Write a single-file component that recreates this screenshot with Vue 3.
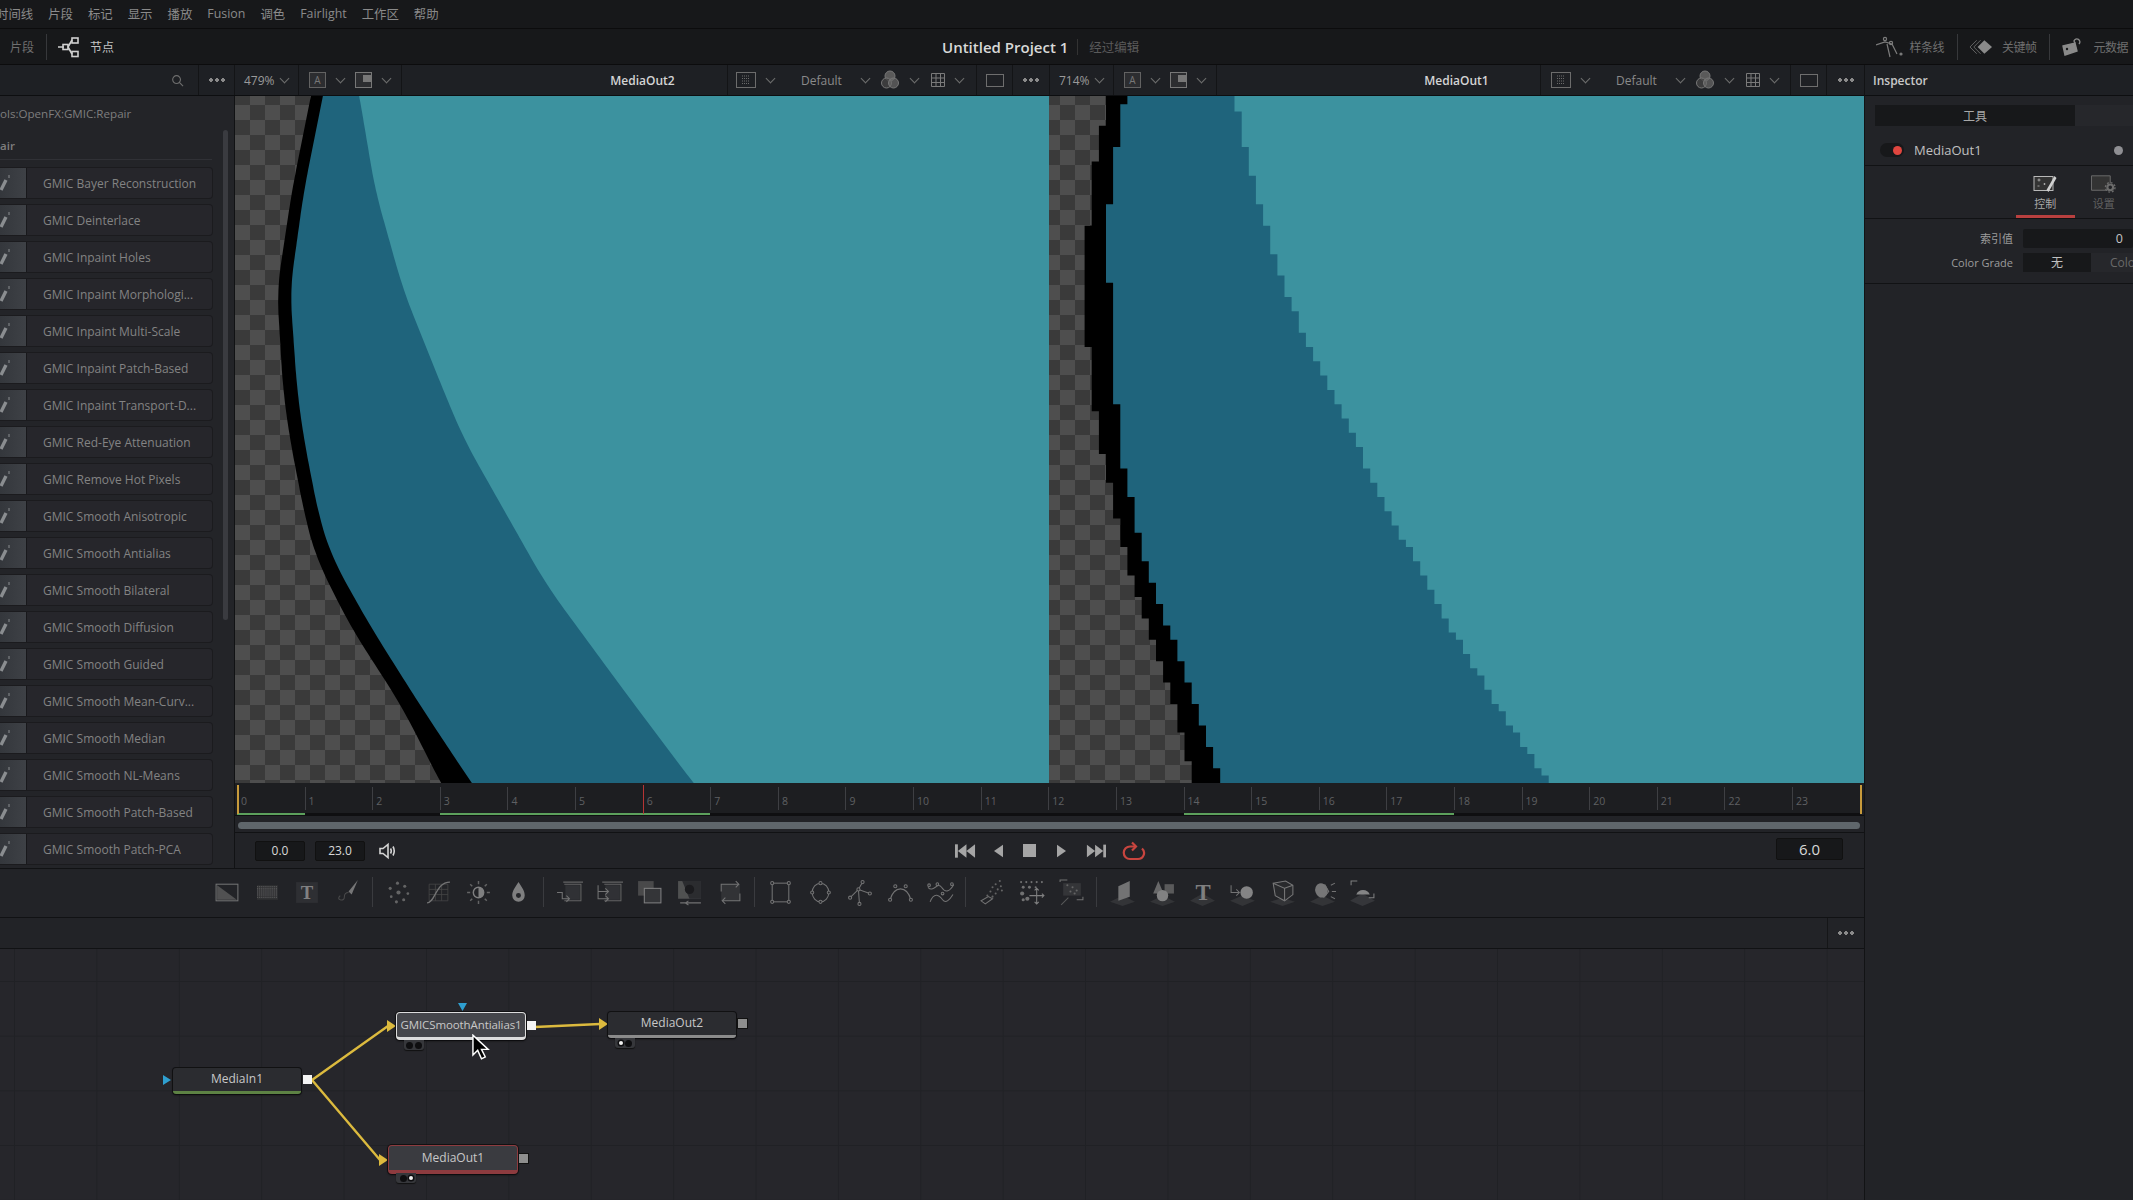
<script setup>
import { computed } from "vue";

const menus = ["片段", "标记", "显示", "播放", "Fusion", "调色", "Fairlight", "工作区", "帮助"];

const tools = [
  "Bayer Reconstruction", "Deinterlace", "Inpaint Holes", "Inpaint Morphologi...", "Inpaint Multi-Scale",
  "Inpaint Patch-Based", "Inpaint Transport-D...", "Red-Eye Attenuation", "Remove Hot Pixels",
  "Smooth Anisotropic", "Smooth Antialias", "Smooth Bilateral", "Smooth Diffusion", "Smooth Guided",
  "Smooth Mean-Curv...", "Smooth Median", "Smooth NL-Means", "Smooth Patch-Based", "Smooth Patch-PCA",
];

// frames that are cached get a green line under the ruler
const cached = [0, 3, 4, 5, 6, 14, 15, 16, 17];
const frames = Array.from({ length: 24 }, (_, i) => i);
const framePx = 67.62;

// edges of the picture, as [y, x] in page pixels
const edges1 = {
  black: [[60, 318], [95, 311], [190, 292], [290, 277], [390, 283], [440, 290], [517, 305], [558, 316], [626, 350], [707, 402], [790, 444], [830, 470]],
  dark: [[60, 330], [95, 323], [190, 304], [290, 290], [390, 297], [440, 304], [517, 319], [558, 332], [626, 370], [707, 421], [790, 476], [830, 505]],
  light: [[60, 352], [95, 359], [190, 375], [290, 403], [390, 443], [440, 464], [585, 546], [694, 626], [790, 698], [830, 733]],
};
const edges2 = {
  black: [[90, 1108], [127, 1102], [162, 1095], [227, 1088], [310, 1085], [390, 1092], [462, 1104], [544, 1123], [612, 1142], [707, 1174], [790, 1195]],
  dark: [[90, 1130], [112, 1122], [155, 1116], [205, 1109], [340, 1110], [390, 1115], [462, 1123], [544, 1140], [612, 1163], [707, 1197], [790, 1224]],
  light: [[90, 1234], [150, 1246], [204, 1260], [290, 1284], [390, 1330], [517, 1392], [626, 1450], [707, 1498], [790, 1553]],
};

function xAt(pts, y) {
  for (let i = 0; i < pts.length - 1; i++) {
    if (y <= pts[i + 1][0]) {
      const t = (y - pts[i][0]) / (pts[i + 1][0] - pts[i][0]);
      return pts[i][1] + (pts[i + 1][1] - pts[i][1]) * t;
    }
  }
  return pts[pts.length - 1][1];
}

// soft edge: sample and average neighbours so the corners round off
function smoothPath(pts, right) {
  let d = "";
  for (let y = 90; y <= 790; y += 4) {
    let sum = 0;
    for (let k = -24; k <= 24; k += 6) sum += xAt(pts, y + k);
    d += (d ? "L" : "M") + (sum / 9).toFixed(1) + " " + y + " ";
  }
  return d + `L${right} 790 L${right} 90 Z`;
}

// 714% view: the same kind of edge but snapped to the source pixels
function stepPath(pts, right) {
  const s = 7.14;
  const ox = 1106;
  let d = "";
  for (let y = 90; y < 790; y += s) {
    const x = ox + Math.round((xAt(pts, y + s / 2) - ox) / s) * s;
    d += (d ? "L" : "M") + x.toFixed(1) + " " + y.toFixed(1) + " L" + x.toFixed(1) + " " + (y + s).toFixed(1) + " ";
  }
  return d + `L${right} 790 L${right} 90 Z`;
}

const view1 = computed(() => Object.values(edges1).map((e) => smoothPath(e, 1060)));
const view2 = computed(() => Object.values(edges2).map((e) => stepPath(e, 1870)));
const layerFill = ["#000", "#1f647c", "#3c929f"];

const toolIcons = [
  [
    '<rect x="2" y="5" width="21" height="16" stroke="#8a8a8a"/><path d="M3 6L22 20H3Z" fill="#5f5f5f" stroke="none"/>',
    '<rect x="3" y="6" width="20" height="14" fill="#353537" stroke="none"/><path d="M3 7.5H23M3 9.5H23M3 11.5H23M3 13.5H23M3 15.5H23M3 17.5H23" stroke="#7c7c7c" stroke-dasharray="1 1"/>',
    '<rect x="2" y="3" width="21" height="20" fill="#323337" stroke="none"/><text x="12.5" y="19" text-anchor="middle" font-family="Liberation Serif" font-size="18" font-weight="700" fill="#9c9c9c" stroke="none">T</text>',
    '<path d="M23 1L14 12L17 15Z" fill="#8e8e8e" stroke="none"/><path d="M14 13Q10 13 10 17Q10 21 6 20Q3 19 6 16" stroke="#555"/>',
  ],
  [
    '<g fill="#777" stroke="none"><circle cx="12" cy="4" r="1.5"/><circle cx="19" cy="7" r="1.5"/><circle cx="22" cy="14" r="1.3"/><circle cx="18" cy="20" r="1.5"/><circle cx="11" cy="22" r="1.5"/><circle cx="6" cy="17" r="1.3"/><circle cx="5" cy="9" r="1.5"/><circle cx="13" cy="13" r="2"/></g>',
    '<path d="M4 5H22V21H4ZM10 5V21M16 5V21M4 10H22M4 15H22" stroke="#4f4f4f" stroke-width=".8"/><path d="M2 23C10 23 10 3 24 3" stroke="#8c8c8c" stroke-width="1.2"/>',
    '<circle cx="13" cy="13" r="5" stroke="#9a9a9a" stroke-width="1.4"/><path d="M13 8A5 5 0 0 1 13 18Z" fill="#9a9a9a" stroke="none"/><path d="M13 2V5M13 21V24M2 13H5M21 13H24M5 5L7 7M19 19L21 21M5 21L7 19M19 7L21 5" stroke="#777" stroke-width="1.4"/>',
    '<path d="M13 3C9 9 7 12 7 16A6 6 0 0 0 19 16C19 12 17 9 13 3Z" fill="#9a9a9a" stroke="none"/><circle cx="13" cy="16" r="2.4" fill="#26272b" stroke="none"/>',
  ],
  [
    '<path d="M7 3H26M8 5H24V21H8" stroke="#777"/><rect x="9" y="6" width="14" height="14" fill="#353639" stroke="none"/><path d="M1 13H6V19H13M10 16L13 19L10 22" stroke="#8a8a8a"/>',
    '<path d="M6 3H26M8 5H24V21H8" stroke="#777"/><rect x="9" y="6" width="14" height="14" fill="#353639" stroke="none"/><path d="M2 6V19H12M2 12H12M9 9L12 12L9 15M9 16L12 19L9 22" stroke="#8a8a8a"/>',
    '<rect x="2" y="2" width="15" height="14" fill="#545454" stroke="none"/><rect x="8" y="9" width="16" height="14" fill="#3a3b3e" stroke="#9a9a9a"/>',
    '<rect x="2" y="2" width="22" height="17" fill="#5e5e5e" stroke="none"/><path d="M2 2H20L13 19H2Z" fill="#2e2f32" stroke="none" transform="matrix(-1 0 0 1 26 0)"/><circle cx="13" cy="10" r="4.5" fill="#1a1a1c" stroke="none"/><path d="M4 23H24M12 21L9 23L12 25" stroke="#888"/>',
    '<rect x="5" y="5" width="18" height="16" fill="#37383b" stroke="none"/><path d="M5 12V5H21M19 2L22 5L19 8M23 14V21H7M9 18L6 21L9 24" stroke="#8c8c8c"/>',
  ],
  [
    '<rect x="5" y="4" width="16" height="18" stroke="#8a8a8a"/><g fill="#26272b" stroke="#8a8a8a"><circle cx="5" cy="4" r="1.5"/><circle cx="21" cy="4" r="1.5"/><circle cx="5" cy="22" r="1.5"/><circle cx="21" cy="22" r="1.5"/></g>',
    '<ellipse cx="13" cy="13" rx="8" ry="9" stroke="#8a8a8a"/><g fill="#26272b" stroke="#8a8a8a"><circle cx="13" cy="4" r="1.5"/><circle cx="21" cy="13" r="1.5"/><circle cx="13" cy="22" r="1.5"/><circle cx="5" cy="13" r="1.5"/></g>',
    '<path d="M15 3L11 10L22 14M11 10L12 24M11 10L3 18" stroke="#8a8a8a"/><g fill="#26272b" stroke="#8a8a8a"><circle cx="15" cy="3" r="1.5"/><circle cx="22" cy="14" r="1.5"/><circle cx="12" cy="24" r="1.5"/><circle cx="3" cy="18" r="1.5"/><circle cx="11" cy="10" r="1.5"/></g>',
    '<path d="M3 20C7 6 19 6 23 20" stroke="#8a8a8a"/><g fill="#26272b" stroke="#8a8a8a"><circle cx="3" cy="20" r="1.5"/><circle cx="23" cy="20" r="1.5"/><circle cx="8" cy="7" r="1.5"/><circle cx="18" cy="7" r="1.5"/></g>',
    '<path d="M1 8C6 14 10 2 14 8S22 12 26 5M3 22C7 12 12 16 15 20S22 20 25 15" stroke="#8a8a8a"/><g fill="#26272b" stroke="#8a8a8a"><circle cx="2" cy="6" r="1.3"/><circle cx="24" cy="5" r="1.3"/><circle cx="10" cy="5" r="1.3"/><circle cx="15" cy="14" r="1.3"/></g>',
  ],
  [
    '<g fill="#777" stroke="none"><circle cx="21" cy="2" r="1"/><circle cx="17" cy="5" r="1"/><circle cx="22" cy="7" r="1"/><circle cx="14" cy="8" r="1"/><circle cx="19" cy="10" r="1"/><circle cx="12" cy="12" r="1"/><circle cx="17" cy="14" r="1"/><circle cx="23" cy="11" r="1"/><circle cx="9" cy="16" r="1"/><circle cx="14" cy="17" r="1"/></g><path d="M3 21L10 17L14 19L7 24Z" stroke="#888"/>',
    '<g fill="#888" stroke="none"><circle cx="3" cy="3" r="1"/><circle cx="8" cy="3" r="1"/><circle cx="13" cy="3" r="1"/><circle cx="18" cy="3" r="1"/><circle cx="23" cy="3" r="1"/><circle cx="5" cy="8" r="1.4"/><circle cx="11" cy="8" r="1.4"/><circle cx="17" cy="8" r="1"/><circle cx="4" cy="14" r="2"/><circle cx="9" cy="19" r="2"/><circle cx="5" cy="20" r="1.5"/></g><path d="M11 16H25M18 9V24M16 11L18 9L20 11M16 22L18 24L20 22M23 14L25 16L23 18" stroke="#9a9a9a"/>',
    '<path d="M2 3V1H9M24 17V20H18" stroke="#888"/><g fill="#777" stroke="none"><rect x="5" y="4" width="17" height="12" fill="#3a3b3e"/><circle cx="9" cy="6" r="1"/><circle cx="14" cy="8" r="1"/><circle cx="18" cy="11" r="1"/><circle cx="12" cy="12" r="1"/><circle cx="16" cy="14" r="1"/></g><path d="M3 25L10 18" stroke="#666"/>',
  ],
  [
    '<path d="M13 16L25 22L13 26L1 22Z" fill="#38393c" stroke="none"/><path d="M9 7L20 2V17L9 21Z" fill="#8a8a8a" stroke="none"/>',
    '<path d="M13 16L25 22L13 26L1 22Z" fill="#38393c" stroke="none"/><path d="M9 2L14 14H4Z" fill="#7c7c7c" stroke="none"/><rect x="15" y="5" width="9" height="9" fill="#6a6a6a" stroke="none"/><circle cx="13" cy="16" r="5.5" fill="#9c9c9c" stroke="none"/>',
    '<path d="M13 14L25 21L13 26L1 21Z" fill="#38393c" stroke="none"/><text x="13.5" y="20" text-anchor="middle" font-family="Liberation Serif" font-size="22" font-weight="700" fill="#9a9a9a" stroke="none">T</text>',
    '<path d="M13 16L25 21L13 26L1 21Z" fill="#38393c" stroke="none"/><path d="M2 6V13H10M7 10L10 13L7 16" stroke="#8a8a8a"/><circle cx="17" cy="13" r="6" fill="#a0a0a0" stroke="none"/>',
    '<path d="M13 18L25 22L13 26L1 22Z" fill="#38393c" stroke="none"/><path d="M4 4L16 2L23 6V15L15 21L6 16Z" fill="#2b2c2f" stroke="#909090"/><path d="M4 4L15 9V21M15 9L23 6" stroke="#909090"/>',
    '<path d="M13 16L25 22L13 26L1 22Z" fill="#38393c" stroke="none"/><ellipse cx="12" cy="11" rx="6" ry="7" fill="#8e8e8e" stroke="none" transform="rotate(-18 12 11)"/><path d="M15 5L19 12L14 18M21 6L25 4M22 12H26M21 17L25 19" stroke="#8a8a8a"/>',
    '<path d="M13 14L25 21L13 26L1 21Z" fill="#3b3c40" stroke="none"/><path d="M7 15A7 7 0 0 1 20 15Z" fill="#a0a0a0" stroke="none"/><path d="M2 6V2H8M24 14V18H19" stroke="#999"/>',
  ],
];

const nodes = [
  { id: "in1", name: "MediaIn1", cls: "n-in", out: "white" },
  { id: "gmic", name: "GMICSmoothAntialias1", cls: "n-gmic", out: "white", dots: [0, 0] },
  { id: "out2", name: "MediaOut2", cls: "n-out2", out: "gray", dots: [1, 0] },
  { id: "out1", name: "MediaOut1", cls: "n-out1", out: "gray", dots: [0, 1] },
];
// input arrows on the wires: tip x, y, base x
const arrows = [
  [396, 1026, 387],
  [608, 1024, 599],
  [388, 1160, 379],
];
</script>

<template>
  <div class="app">
    <header class="menubar">
      <span class="first-menu">时间线</span>
      <span v-for="m in menus" :key="m">{{ m }}</span>
    </header>

    <div class="topbar">
      <div class="tb-left">
        <span class="tb-label">片段</span>
        <i class="tb-sep"></i>
        <svg class="tb-nodes" viewBox="0 0 24 24" fill="none" stroke="#d0d0d0" stroke-width="1.6">
          <path d="M1 12H7M11 12L15 5M11 12L15 19" />
          <rect x="6" y="9.5" width="5" height="5" />
          <rect x="15" y="3" width="6" height="5" />
          <rect x="15" y="16.5" width="6" height="5" />
        </svg>
        <span class="tb-label tb-on">节点</span>
      </div>
      <div class="tb-title">
        <b>Untitled Project 1</b>
        <i class="title-sep"></i>
        <span>经过编辑</span>
      </div>
      <div class="tb-right">
        <svg class="tb-ico" viewBox="0 0 27 22" fill="none" stroke="#7c7c7c" stroke-width="1.2">
          <path d="M0 9L9 6L16 8M11 8L14 21M16 8L21 18" />
          <circle cx="9" cy="3" r="1.6" /><circle cx="15" cy="7" r="1.6" />
          <circle cx="25" cy="18" r="1" fill="#7c7c7c" />
        </svg>
        <span class="tb-label tb-r1">样条线</span>
        <i class="tb-sep"></i>
        <svg class="tb-ico tb-kf" viewBox="0 0 25 16" fill="none" stroke="#666">
          <path d="M8 1L1 8L8 15M12 1L5 8L12 15" />
          <path d="M16 1L24 8L16 15L9 8Z" fill="#8a8a8a" stroke="none" />
        </svg>
        <span class="tb-label tb-r2">关键帧</span>
        <i class="tb-sep"></i>
        <svg class="tb-ico tb-meta" viewBox="0 0 20 18" fill="none" stroke="#8a8a8a" stroke-width="1.4">
          <path d="M1 8L13 5L15 13L3 17Z" fill="#8a8a8a" />
          <circle cx="5" cy="11" r="1.2" fill="#17181a" stroke="none" />
          <path d="M13 5L12 3A3 3 0 1 1 17 6" />
        </svg>
        <span class="tb-label tb-r3">元数据</span>
      </div>
    </div>

    <div class="work">
      <div class="main">
        <div class="heads">
          <div class="h-cell h-search">
            <svg class="search" viewBox="0 0 14 14" fill="none" stroke="#6e6e6e" stroke-width="1.2">
              <circle cx="6" cy="6" r="4.2" /><path d="M9 9L13 13" />
            </svg>
          </div>
          <div class="h-cell h-more"><i class="dots"></i></div>

          <div class="h-cell h-zoom"><span>479%</span><i class="chev chev-near"></i></div>
          <div class="h-cell h-ab">
            <span class="box-a">A</span><i class="chev"></i>
            <span class="box-pic"></span><i class="chev"></i>
          </div>
          <div class="h-title h-title-1">MediaOut2</div>
          <div class="h-cell h-opts">
            <svg class="ic-disp" viewBox="0 0 20 16" fill="none" stroke="#6c6c6c">
              <rect x=".5" y=".5" width="19" height="15" /><path d="M6 4H14M6 6.5H14M6 9H14M6 11.5H14" stroke-width="1.2" stroke-dasharray="1 1" />
            </svg>
            <i class="chev"></i>
            <span class="def">Default</span><i class="chev chev-def"></i>
            <svg class="ic-col" viewBox="0 0 20 20" fill="none" stroke="#777">
              <circle cx="10" cy="6" r="5" fill="#5a5a5a" /><circle cx="6.5" cy="13" r="5" fill="#444" fill-opacity=".8" /><circle cx="13.5" cy="13" r="5" fill="#6a6a6a" fill-opacity=".7" />
            </svg>
            <i class="chev"></i>
            <svg class="ic-grid" viewBox="0 0 14 14" fill="none" stroke="#7a7a7a">
              <path d="M.5.5H13.5V13.5H.5ZM5 .5V13.5M9.5 .5V13.5M.5 5H13.5M.5 9.5H13.5" />
            </svg>
            <i class="chev"></i>
          </div>
          <div class="h-cell h-rect"><span class="rect-ic"></span></div>
          <div class="h-cell h-more h-more-b"><i class="dots"></i></div>

          <div class="h-cell h-zoom"><span>714%</span><i class="chev chev-near"></i></div>
          <div class="h-cell h-ab">
            <span class="box-a">A</span><i class="chev"></i>
            <span class="box-pic"></span><i class="chev"></i>
          </div>
          <div class="h-title h-title-2">MediaOut1</div>
          <div class="h-cell h-opts h-opts-b">
            <svg class="ic-disp" viewBox="0 0 20 16" fill="none" stroke="#6c6c6c">
              <rect x=".5" y=".5" width="19" height="15" /><path d="M6 4H14M6 6.5H14M6 9H14M6 11.5H14" stroke-width="1.2" stroke-dasharray="1 1" />
            </svg>
            <i class="chev"></i>
            <span class="def">Default</span><i class="chev chev-def"></i>
            <svg class="ic-col" viewBox="0 0 20 20" fill="none" stroke="#777">
              <circle cx="10" cy="6" r="5" fill="#5a5a5a" /><circle cx="6.5" cy="13" r="5" fill="#444" fill-opacity=".8" /><circle cx="13.5" cy="13" r="5" fill="#6a6a6a" fill-opacity=".7" />
            </svg>
            <i class="chev"></i>
            <svg class="ic-grid" viewBox="0 0 14 14" fill="none" stroke="#7a7a7a">
              <path d="M.5.5H13.5V13.5H.5ZM5 .5V13.5M9.5 .5V13.5M.5 5H13.5M.5 9.5H13.5" />
            </svg>
            <i class="chev"></i>
          </div>
          <div class="h-cell h-rect"><span class="rect-ic"></span></div>
          <div class="h-cell h-more h-more-c"><i class="dots"></i></div>
        </div>

        <div class="upper">
          <aside class="toolbox">
            <div class="crumb">ols:OpenFX:GMIC:Repair</div>
            <div class="group">air</div>
            <div class="scroll-thumb"></div>
            <ul class="tool-list">
              <li v-for="t in tools" :key="t" class="tool">
                <span class="tool-ic">
                  <svg viewBox="0 0 12 20" fill="none" stroke="#8a8d90" stroke-width="3.4"><path d="M1 17L6 7" /><path d="M9 2V5" stroke-width="1" /></svg>
                </span>
                <span class="tool-name">GMIC {{ t }}</span>
              </li>
            </ul>
          </aside>

          <div class="centre">
            <div class="viewers">
              <div class="viewer viewer-a">
                <svg viewBox="235 96 813 687" preserveAspectRatio="none">
                  <path v-for="(d, i) in view1" :key="i" :d="d" :fill="layerFill[i]" />
                </svg>
              </div>
              <div class="viewer viewer-b">
                <svg viewBox="1049 96 815 687" preserveAspectRatio="none">
                  <path v-for="(d, i) in view2" :key="i" :d="d" :fill="layerFill[i]" />
                </svg>
              </div>
            </div>

            <div class="ruler">
              <div v-for="f in frames" :key="f" class="frame" :class="{ cached: cached.includes(f) }">
                <span class="tick">{{ f }}</span>
              </div>
              <i class="mark mark-start"></i>
              <i class="mark mark-end"></i>
              <i class="playhead" :style="{ left: 2 + 6 * framePx + 'px' }"></i>
            </div>

            <div class="range"><div class="range-bar"></div></div>

            <div class="controls">
              <span class="field">0.0</span>
              <span class="field field-2">23.0</span>
              <svg class="speaker" viewBox="0 0 18 18" fill="none" stroke="#d4d4d4" stroke-width="1.6">
                <path d="M2 6.5H5L10 2.5V15.5L5 11.5H2Z" /><path d="M12.5 6.5Q14 9 12.5 11.5M15 4.5Q17.5 9 15 13.5" />
              </svg>
              <div class="transport">
                <svg viewBox="0 0 22 14" fill="#a5a5a5"><rect x="0" y="0" width="3" height="14" /><path d="M12 0V14L3 7ZM21 0V14L12 7Z" /></svg>
                <svg class="t-prev" viewBox="0 0 10 14" fill="#a5a5a5"><path d="M10 0V14L0 7Z" /></svg>
                <svg class="t-stop" viewBox="0 0 14 14" fill="#a5a5a5"><rect width="14" height="14" /></svg>
                <svg class="t-play" viewBox="0 0 10 14" fill="#a5a5a5"><path d="M0 0V14L10 7Z" /></svg>
                <svg class="t-end" viewBox="0 0 22 14" fill="#a5a5a5"><rect x="19" y="0" width="3" height="14" /><path d="M1 0V14L10 7ZM10 0V14L19 7Z" /></svg>
                <svg class="t-loop" viewBox="0 0 24 20" fill="none" stroke="#c8453f" stroke-width="2.2">
                  <path d="M13 5.5H8A6 6 0 0 0 8 18H16A6 6 0 0 0 20 7.5" />
                  <path d="M10 1.5L14 5.5L10 9.5" />
                </svg>
              </div>
              <span class="field field-big">6.0</span>
            </div>
          </div>
        </div>

        <div class="toolbar">
          <template v-for="(group, g) in toolIcons" :key="g">
            <i v-if="g" class="tool-sep"></i>
            <span v-for="(ic, n) in group" :key="n" class="tool-btn">
              <svg viewBox="0 0 26 26" fill="none" stroke="#888" v-html="ic"></svg>
            </span>
          </template>
        </div>

        <div class="node-head"><span class="node-more"><i class="dots"></i></span></div>

        <div class="canvas">
          <svg class="wires" viewBox="0 949 1864 251" fill="none" stroke="#dcba3e" stroke-width="2.4">
            <path d="M312 1080L388 1026M312 1080L380 1160M535 1027L600 1024" />
            <path v-for="(a, i) in arrows" :key="i" :d="`M${a[0]} ${a[1]}L${a[2]} ${a[1] - 6}V${a[1] + 6}Z`" fill="#dcba3e" stroke="none" />
            <path d="M163 1075L171 1080L163 1085ZM458 1003H467L462.5 1011Z" fill="#2f9fd0" stroke="none" />
          </svg>

          <div v-for="n in nodes" :key="n.id" class="node" :class="n.cls">
            <span class="node-name">{{ n.name }}</span>
            <i class="port" :class="n.out"></i>
            <span v-if="n.dots" class="badge">
              <i v-for="(on, k) in n.dots" :key="k" :class="{ on }"></i>
            </span>
          </div>

          <svg class="cursor" viewBox="0 0 20 28">
            <path d="M1 1V22L6 17L10 26L14 24L10 16H17Z" fill="#000" stroke="#fff" stroke-width="1.5" />
          </svg>
        </div>
      </div>

      <aside class="inspector">
        <div class="ins-head">Inspector</div>
        <div class="ins-tabs"><span class="ins-tab">工具</span></div>
        <div class="ins-node">
          <span class="toggle"><i></i></span>
          <span class="ins-name">MediaOut1</span>
          <i class="ins-dot"></i>
        </div>
        <div class="ins-modes">
          <div class="mode active">
            <svg viewBox="0 0 24 18" fill="none" stroke="#b8b8b8">
              <rect x=".5" y="1.5" width="19" height="14" fill="#333" />
              <path d="M4 5H7M5.5 3.5V6.5M10 9H12M11 8V10M4 11H6" stroke-width=".8" />
              <path d="M21 1L13 15L15 17L23 3Z" fill="#d0d0d0" stroke="none" />
            </svg>
            <span>控制</span>
          </div>
          <div class="mode">
            <svg viewBox="0 0 26 18" fill="none" stroke="#6c6c6c">
              <path d="M17 15.5H.5V.5H20V8" fill="#333" />
              <circle cx="20" cy="12.5" r="3" stroke-width="2.2" /><circle cx="20" cy="12.5" r="5" stroke-width="1.4" stroke-dasharray="2 1.9" />
            </svg>
            <span>设置</span>
          </div>
        </div>
        <div class="ins-props">
          <div class="prop">
            <label>索引值</label>
            <span class="prop-field">0</span>
          </div>
          <div class="prop">
            <label>Color Grade</label>
            <div class="prop-seg"><span class="seg-on">无</span><span class="seg-off">Color</span></div>
          </div>
        </div>
      </aside>
    </div>
  </div>
</template>

<style scoped>
.app {
  width: 2133px;
  height: 1200px;
  display: flex;
  flex-direction: column;
  overflow: hidden;
  background: #222327;
  color: #8c8c8c;
  font-family: "Open Sans", "Noto Sans CJK SC", sans-serif;
  font-size: 12px;
}

i { font-style: normal; display: block; }

.menubar {
  height: 29px;
  flex: none;
  display: flex;
  align-items: center;
  gap: 15px;
  padding-bottom: 1px;
  background: #17181a;
  border-bottom: 1px solid #0c0c0d;
  box-sizing: border-box;
  font-size: 12.4px;
  color: #8a8a8a;
  overflow: hidden;
  white-space: nowrap;
}
.first-menu { margin-left: -4px; }

.topbar {
  height: 36px;
  flex: none;
  display: flex;
  align-items: center;
  position: relative;
  background: #17181a;
  border-bottom: 1px solid #0c0c0d;
  box-sizing: border-box;
}
.tb-left { display: flex; align-items: center; padding-left: 10px; width: 942px; box-sizing: border-box; }
.tb-sep { width: 1px; height: 26px; background: #37383b; margin-left: 12px; }
.tb-label { font-size: 12px; color: #6f6f6f; white-space: nowrap; }
.tb-on { color: #c4c4c4; margin-left: 9px; }
.tb-nodes { width: 24px; height: 24px; margin-left: 10px; }
.tb-title { display: flex; align-items: center; }
.tb-title b { font-size: 15px; font-weight: 600; color: #d8d8d8; white-space: nowrap; }
.title-sep { width: 1px; height: 16px; background: #333; margin: 0 11px 0 9px; }
.tb-title span { font-size: 12.5px; color: #5a5a5a; white-space: nowrap; }
.tb-right { margin-left: auto; display: flex; align-items: center; padding-right: 5px; }
.tb-ico { width: 27px; height: 22px; }
.tb-kf { width: 24px; height: 16px; margin-left: 11px; }
.tb-meta { width: 20px; height: 18px; margin-left: 12px; }
.tb-r1 { margin-left: 6px; letter-spacing: -.5px; }
.tb-r2 { margin-left: 9px; letter-spacing: -.5px; }
.tb-r3 { margin-left: 11px; letter-spacing: -.5px; }
.tb-right .tb-sep { margin-left: 13px; }

.work { flex: 1; display: flex; min-height: 0; }
.main { width: 1864px; flex: none; display: flex; flex-direction: column; }

.heads {
  height: 31px;
  flex: none;
  display: flex;
  background: #1e2024;
  border-bottom: 1px solid #0d0e10;
  box-sizing: border-box;
  font-size: 12px;
}
.h-cell {
  display: flex;
  align-items: center;
  flex: none;
  box-sizing: border-box;
  border-right: 1px solid #131416;
}
.h-search { width: 199px; justify-content: flex-end; padding-right: 14px; }
.search { width: 13px; height: 13px; }
.h-more { width: 36px; justify-content: center; }
.h-more-b { width: 37px; }
.h-more-c { width: 37px; border-right: 0; }
.dots {
  width: 18px;
  height: 4px;
  background: radial-gradient(circle at center, #8a8a8a 1.6px, transparent 2px) 0 0 / 6px 4px repeat-x;
}
.h-zoom { width: 64px; padding-left: 9px; color: #9a9a9a; }
.chev {
  width: 6px;
  height: 6px;
  margin: -3px 11px 0;
  border-right: 1px solid #6e6e6e;
  border-bottom: 1px solid #6e6e6e;
  transform: rotate(45deg);
  flex: none;
}
.chev-near { margin-left: 6px; margin-right: 0; }
.h-ab { width: 103px; padding-left: 10px; }
.box-a {
  width: 18px;
  height: 16px;
  box-sizing: border-box;
  border: 1px solid #626262;
  background: #2c2d30;
  color: #777;
  font-size: 10px;
  text-align: center;
  line-height: 14px;
}
.box-pic {
  width: 18px;
  height: 16px;
  box-sizing: border-box;
  border: 1px solid #777;
  background: linear-gradient(#777, #777) 7px 2px / 8px 7px no-repeat, #2c2d30;
}
.h-title {
  flex: none;
  display: flex;
  align-items: center;
  justify-content: center;
  box-sizing: border-box;
  font-weight: 600;
  color: #d4d4d4;
  border-right: 1px solid #131416;
}
.h-title-1 { width: 326px; padding-left: 156px; }
.h-title-2 { width: 324px; padding-left: 156px; }
.h-opts { width: 249px; padding-left: 8px; }
.h-opts-b { width: 250px; padding-left: 10px; }
.ic-disp { width: 20px; height: 16px; flex: none; }
.ic-col { width: 20px; height: 20px; flex: none; }
.ic-grid { width: 14px; height: 14px; flex: none; margin-left: 2px; }
.def { margin-left: 16px; color: #8a8a8a; white-space: nowrap; }
.chev-def { margin-left: 20px; }
.h-rect { width: 36px; justify-content: center; }
.rect-ic { width: 16px; height: 11px; border: 1px solid #6e6e6e; }

.upper { height: 772px; flex: none; display: flex; }

.toolbox {
  width: 235px;
  flex: none;
  position: relative;
  box-sizing: border-box;
  border-right: 1px solid #111214;
  background: #232428;
  overflow: hidden;
}
.crumb { height: 36px; line-height: 36px; color: #7e7e7e; font-size: 11.6px; white-space: nowrap; }
.group {
  height: 27px;
  line-height: 28px;
  width: 212px;
  color: #7e7e7e;
  font-weight: 600;
  font-size: 11.5px;
  border-bottom: 1px solid #303136;
}
.scroll-thumb {
  position: absolute;
  left: 223px;
  top: 34px;
  width: 5px;
  height: 490px;
  border-radius: 3px;
  background: #3a3b40;
}
.tool-list { list-style: none; margin: 8px 0 0; padding: 0; width: 212px; display: flex; flex-direction: column; gap: 7px; }
.tool {
  height: 30px;
  display: flex;
  align-items: center;
  border-radius: 0 3px 3px 0;
  background: #26262b;
  box-shadow: 0 0 0 1px #1b1b1e;
  overflow: hidden;
}
.tool-ic {
  width: 27px;
  height: 100%;
  flex: none;
  display: flex;
  align-items: center;
  background: linear-gradient(90deg, #34373c, #3e4146);
  border-right: 1px solid #18181b;
  box-sizing: border-box;
}
.tool-ic svg { width: 12px; height: 20px; }
.tool-name { margin-left: 16px; color: #838383; font-size: 12px; white-space: nowrap; }

.centre { width: 1629px; flex: none; display: flex; flex-direction: column; }
.viewers { height: 687px; flex: none; display: flex; background: #111; }
.viewer {
  height: 100%;
  flex: none;
  background: conic-gradient(#3a3a3a 25%, #4e4e4e 0 50%, #3a3a3a 0 75%, #4e4e4e 0) 0 9px / 30px 30px;
}
.viewer svg { display: block; width: 100%; height: 100%; }
.viewer-a { width: 814px; }
.viewer-b { width: 815px; background-position: -4px 9px; }

.ruler {
  height: 33px;
  flex: none;
  display: flex;
  position: relative;
  padding-left: 2px;
  box-sizing: border-box;
  background: #1d1e21;
  border-bottom: 1px solid #0f0f11;
}
.frame {
  width: 67.62px;
  flex: none;
  box-sizing: border-box;
  padding-top: 4px;
  border-bottom: 2px solid #0f0f11;
}
.frame.cached { border-bottom-color: #5ca05c; }
.tick {
  display: block;
  height: 23px;
  box-sizing: border-box;
  border-left: 1px solid #3e3f43;
  padding: 7px 0 0 3px;
  font-size: 10.5px;
  line-height: 14px;
  color: #5f6063;
}
.mark { position: absolute; top: 2px; width: 2px; height: 29px; background: #c79a3b; }
.mark-start { left: 2px; }
.mark-end { left: 1625px; }
.playhead { position: absolute; top: 2px; width: 1px; height: 29px; background: #b53434; }

.range { height: 17px; flex: none; padding: 6px 4px 0 3px; box-sizing: border-box; background: #222327; border-bottom: 1px solid #111214; }
.range-bar { height: 7px; border-radius: 4px; background: #5f666b; }

.controls { flex: 1; display: flex; align-items: center; padding-left: 20px; background: #222327; }
.field {
  width: 50px;
  height: 20px;
  flex: none;
  box-sizing: border-box;
  display: flex;
  align-items: center;
  justify-content: center;
  background: #17181a;
  border: 1px solid #111;
  border-radius: 2px;
  color: #d8d8d8;
  font-size: 12px;
}
.field-2 { margin-left: 10px; }
.field-big { width: 67px; height: 22px; margin: -3px 21px 0 auto; font-size: 15px; }
.speaker { width: 18px; height: 18px; margin-left: 13px; flex: none; }
.transport { display: flex; align-items: center; margin-left: 559px; }
.transport svg { width: 21px; height: 14px; flex: none; }
.transport .t-prev { width: 9px; margin-left: 18px; }
.transport .t-stop { width: 13px; height: 13px; margin-left: 20px; }
.transport .t-play { width: 9px; margin-left: 21px; }
.transport .t-end { width: 20px; margin-left: 20px; }
.transport .t-loop { width: 24px; height: 20px; margin-left: 16px; }

.toolbar {
  height: 50px;
  flex: none;
  display: flex;
  align-items: center;
  padding: 0 0 2px 207px;
  border-top: 1px solid #111214;
  border-bottom: 1px solid #111214;
  box-sizing: border-box;
  background: #222327;
}
.tool-btn { width: 40px; flex: none; display: flex; justify-content: center; opacity: .78; }
.tool-btn svg { width: 27px; height: 27px; }
.tool-sep { width: 1px; height: 30px; margin: 0 5px; background: #3a3b3f; flex: none; }

.node-head {
  height: 31px;
  flex: none;
  display: flex;
  justify-content: flex-end;
  border-bottom: 1px solid #111214;
  box-sizing: border-box;
  background: #222327;
}
.node-more {
  width: 36px;
  display: flex;
  align-items: center;
  justify-content: center;
  border-left: 1px solid #151618;
}

.canvas {
  flex: 1;
  position: relative;
  overflow: hidden;
  background-color: #26262b;
  background-image:
    linear-gradient(90deg, #202125 1px, transparent 1px),
    linear-gradient(#202125 1px, transparent 1px);
  background-size: 82.4px 54.7px;
  background-position: 14px 32px;
}
.wires { position: absolute; inset: 0; width: 100%; height: 100%; }
.cursor { position: absolute; left: 472px; top: 85px; width: 19px; height: 27px; }

.node {
  position: absolute;
  box-sizing: border-box;
  display: flex;
  align-items: flex-start;
  justify-content: center;
  background: #2b2c30;
  border-radius: 3px;
  color: #c8c8c8;
  font-size: 12px;
  box-shadow: 0 1px 2px #0c0c0e, 0 0 0 1px #121214;
}
.node-name { white-space: nowrap; line-height: 22px; }
.n-in { left: 173px; top: 119px; width: 128px; height: 26px; border-bottom: 3px solid #5d8244; }
.n-gmic {
  left: 396px;
  top: 63px;
  width: 130px;
  height: 28px;
  background: #45464b;
  border: 1.5px solid #dcdcdc;
  border-bottom-width: 3px;
  border-radius: 4px;
  font-size: 11.5px;
  letter-spacing: -.1px;
}
.n-gmic .node-name, .n-out1 .node-name { line-height: 24px; }
.n-out2 { left: 608px; top: 63px; width: 128px; height: 26px; border-bottom: 3px solid #8b8b8b; }
.n-out1 {
  left: 388px;
  top: 196px;
  width: 130px;
  height: 29px;
  background: #3a3b40;
  border: 1.5px solid #8d3b3f;
  border-bottom-width: 4px;
  border-radius: 4px;
}
.port { position: absolute; top: 7px; right: -11px; width: 9px; height: 9px; }
.port.white { background: #f4f4f4; }
.port.gray { background: #8e8e8e; outline: 1px solid #111; }
.n-gmic .port { top: 8px; }
.n-out1 .port { top: 8px; }
.badge {
  position: absolute;
  top: 100%;
  left: 7px;
  width: 20px;
  height: 10px;
  margin-top: 3px;
  display: flex;
  align-items: center;
  justify-content: center;
  gap: 2px;
  background: #36373b;
  border-radius: 0 0 3px 3px;
  box-shadow: 0 1px 1px #111;
}
.badge i { width: 7px; height: 7px; border-radius: 50%; background: #0e0e10; }
.badge i.on { background: #f0f0f0; box-shadow: 0 0 0 1.5px #0e0e10; width: 4px; height: 4px; }

.inspector {
  flex: 1;
  background: #222327;
  border-left: 1px solid #121315;
  box-sizing: border-box;
  overflow: hidden;
}
.ins-head {
  height: 31px;
  line-height: 31px;
  padding-left: 8px;
  box-sizing: border-box;
  background: #1e2024;
  border-bottom: 1px solid #0d0e10;
  color: #c8c8c8;
  font-weight: 600;
  font-size: 12px;
}
.ins-tabs { margin: 9px 0 0 10px; height: 21px; background: #26272b; display: flex; }
.ins-tab {
  width: 200px;
  background: #17181a;
  color: #a8a8a8;
  font-size: 12px;
  display: flex;
  align-items: center;
  justify-content: center;
}
.ins-node {
  height: 40px;
  display: flex;
  align-items: center;
  padding: 9px 0 0 15px;
  box-sizing: border-box;
  border-bottom: 1px solid #111214;
}
.toggle {
  width: 24px;
  height: 14px;
  border-radius: 7px;
  background: #17181a;
  display: flex;
  justify-content: flex-end;
  align-items: center;
  padding-right: 2px;
  box-sizing: border-box;
}
.toggle i { width: 9px; height: 9px; border-radius: 50%; background: #e0463f; }
.ins-name { margin-left: 10px; color: #c0c0c0; font-size: 13px; }
.ins-dot { width: 9px; height: 9px; border-radius: 50%; background: #8f8f93; margin-left: auto; margin-right: 10px; }
.ins-modes {
  height: 53px;
  display: flex;
  padding-left: 151px;
  box-sizing: border-box;
  border-bottom: 1px solid #111214;
}
.mode {
  width: 60px;
  display: flex;
  flex-direction: column;
  align-items: center;
  padding-top: 9px;
  box-sizing: border-box;
  font-size: 11px;
  color: #606060;
}
.mode svg { width: 25px; height: 18px; margin-bottom: 2px; }
.mode.active { color: #a8a8a8; border-bottom: 3px solid #b9403f; }
.ins-props { padding: 7px 0 9px; border-bottom: 1px solid #111214; }
.prop { display: flex; align-items: center; height: 24px; }
.prop label { width: 148px; text-align: right; color: #9c9c9c; font-size: 11px; white-space: nowrap; }
.prop-field {
  margin-left: 10px;
  flex: 1;
  height: 19px;
  line-height: 19px;
  text-align: right;
  padding-right: 10px;
  background: #17181a;
  border-radius: 2px;
  color: #c4c4c4;
  font-size: 12.5px;
}
.prop-seg { margin-left: 10px; flex: 1; height: 19px; display: flex; overflow: hidden; background: #26272b; }
.seg-on { width: 68px; flex: none; background: #17181a; color: #c0c0c0; text-align: center; line-height: 19px; }
.seg-off { padding-left: 19px; color: #6a6a6a; line-height: 19px; white-space: nowrap; }
</style>

<style>
html, body { background: #222327; overflow: hidden; }
</style>
